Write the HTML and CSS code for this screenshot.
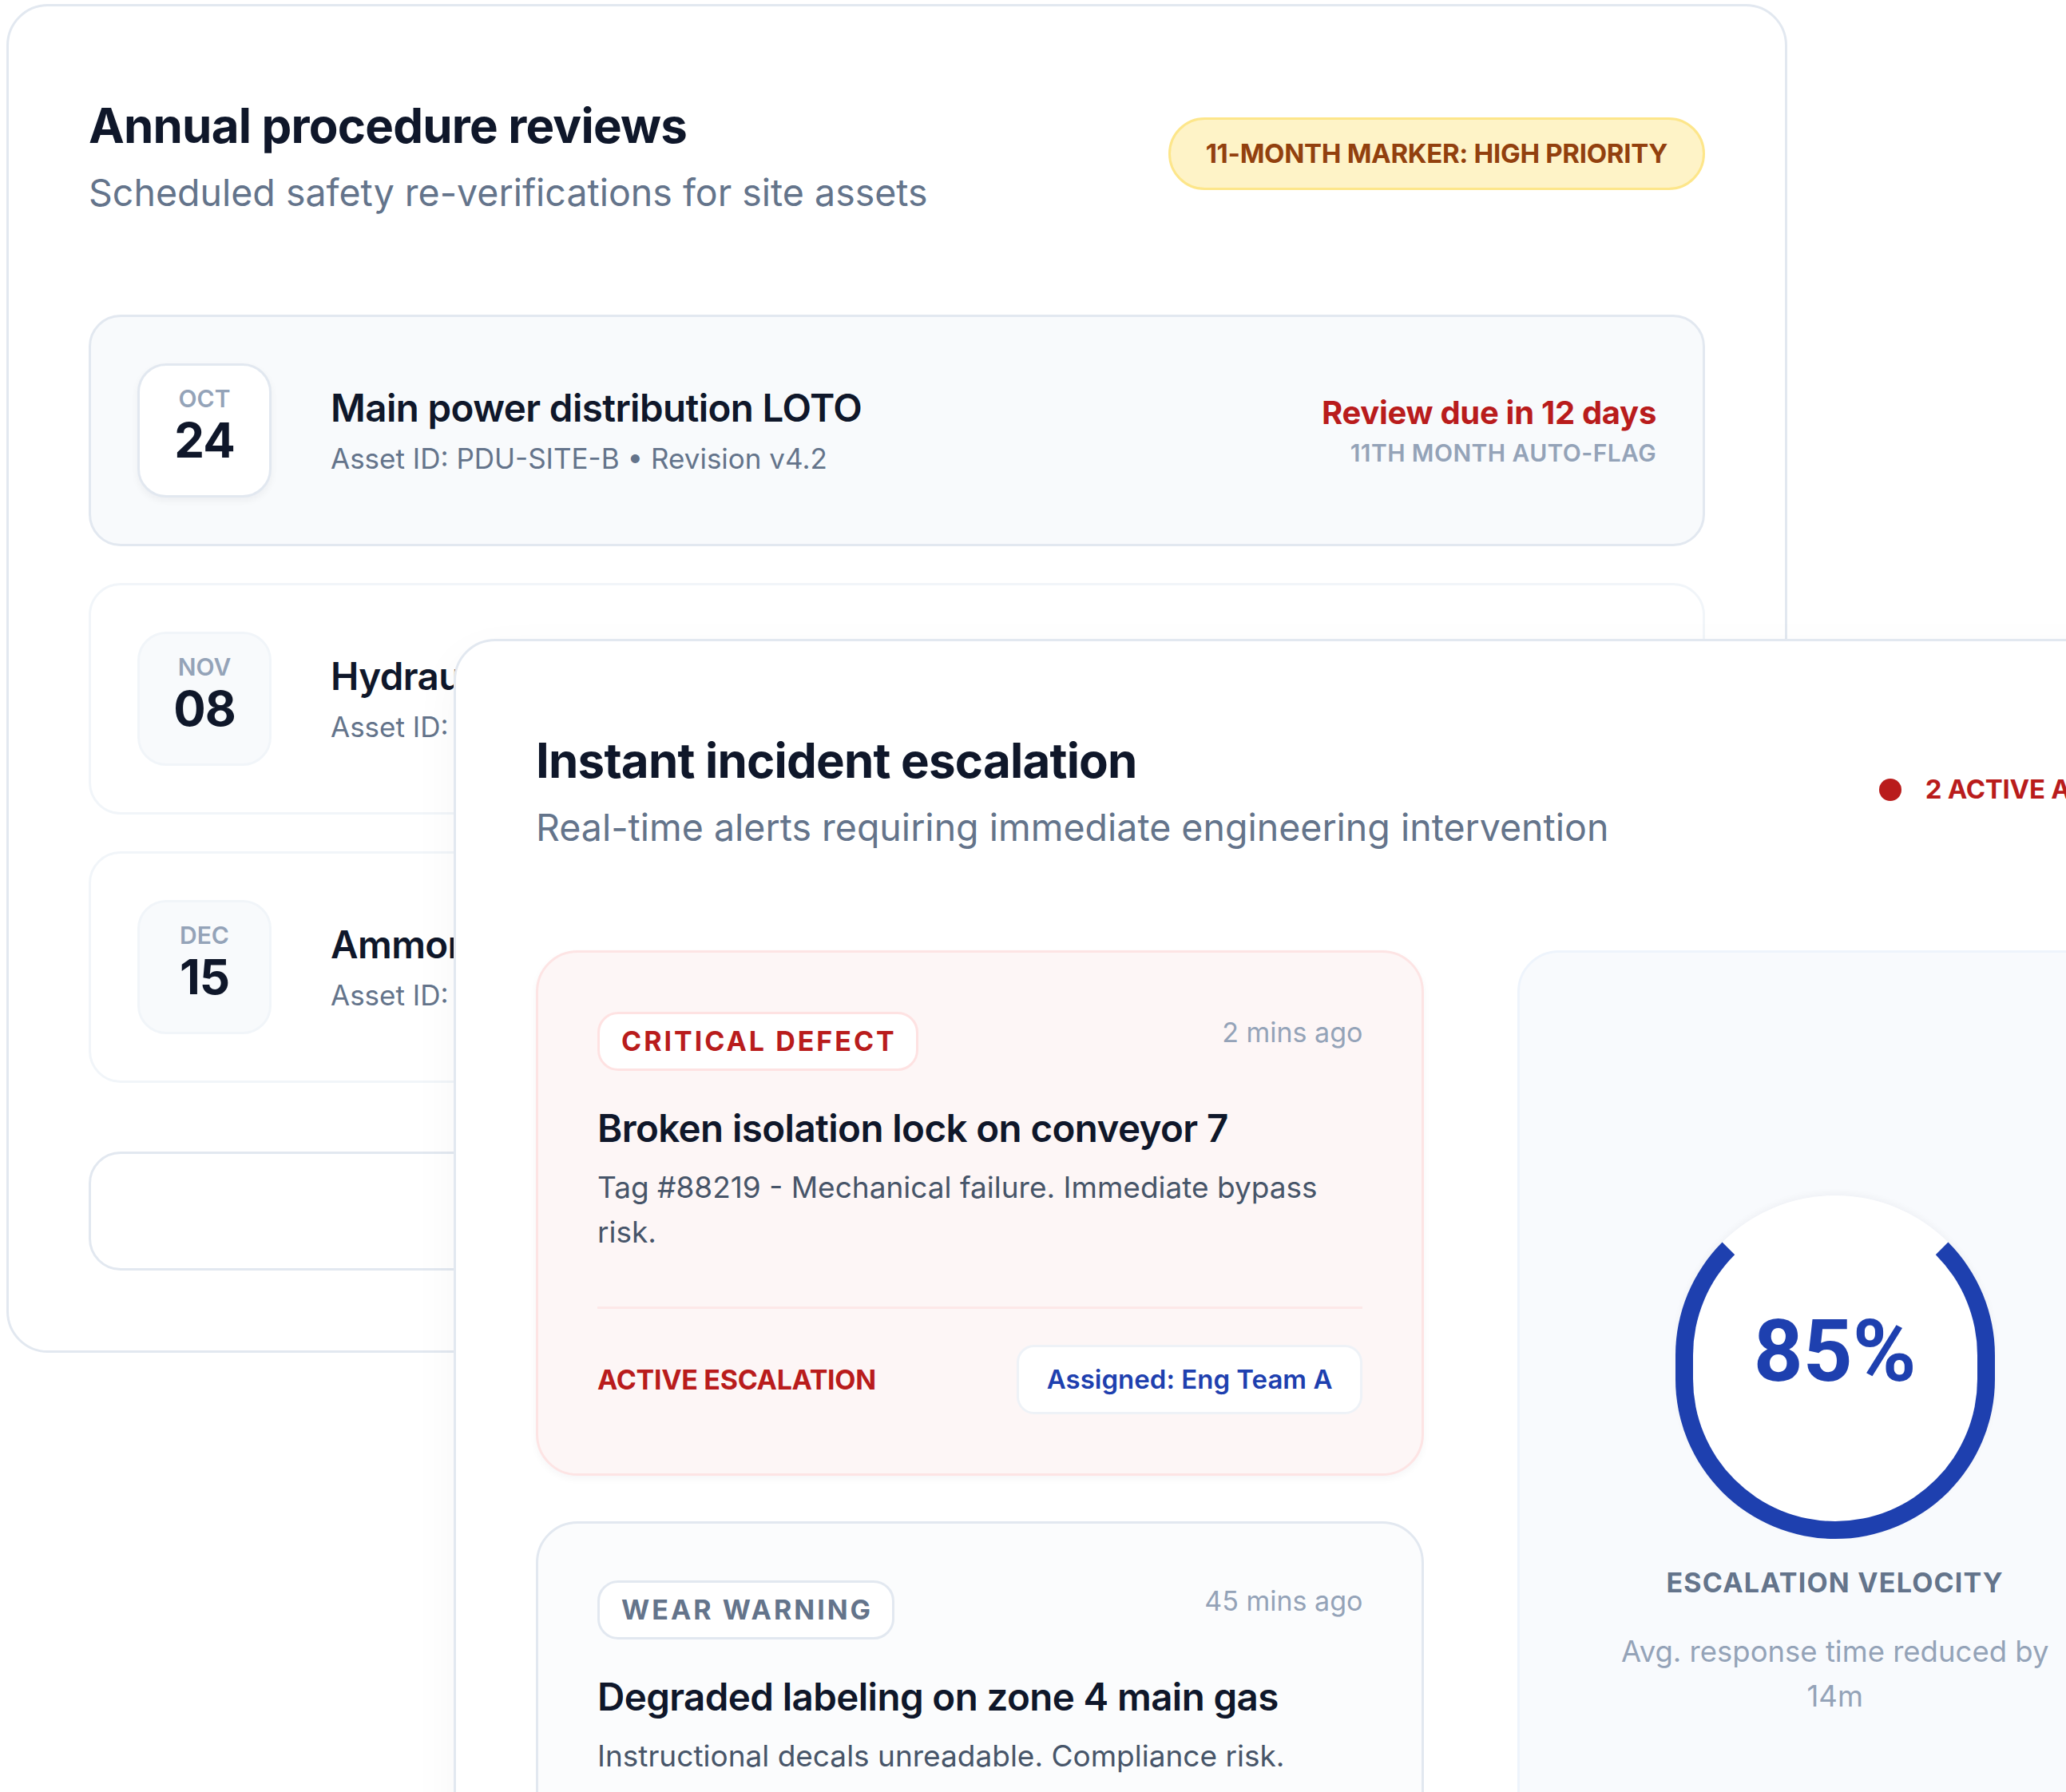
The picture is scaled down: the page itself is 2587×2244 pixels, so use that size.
FILE: index.html
```html
<!DOCTYPE html>
<html lang="en">
<head>
  <meta charset="UTF-8">
  <title>Safety reviews</title>
  <link rel="stylesheet" href="styles.css">
</head>
<body>
  <div class="panel reviews">
    <div class="panel-head">
      <div>
        <h2 class="panel-title">Annual procedure reviews</h2>
        <p class="panel-sub">Scheduled safety re-verifications for site assets</p>
      </div>
      <span class="marker">11-MONTH MARKER: HIGH PRIORITY</span>
    </div>

    <div class="review-list">
      <div class="review on">
        <div class="date">
          <span class="month">OCT</span>
          <span class="day">24</span>
        </div>
        <div class="review-info">
          <div class="review-name">Main power distribution LOTO</div>
          <div class="review-meta">Asset ID: PDU-SITE-B &bull; Revision v4.2</div>
        </div>
        <div class="review-due">
          <div class="due-text">Review due in 12 days</div>
          <div class="due-flag">11TH MONTH AUTO-FLAG</div>
        </div>
      </div>
      <div class="review">
        <div class="date">
          <span class="month">NOV</span>
          <span class="day">08</span>
        </div>
        <div class="review-info">
          <div class="review-name">Hydraulic press guard inspection</div>
          <div class="review-meta">Asset ID: HYD-PRS-04 &bull; Revision v2.1</div>
        </div>
        <div class="review-due">
          <div class="due-text muted">Due in 27 days</div>
          <div class="due-flag">SCHEDULED</div>
        </div>
      </div>
      <div class="review">
        <div class="date">
          <span class="month">DEC</span>
          <span class="day">15</span>
        </div>
        <div class="review-info">
          <div class="review-name">Ammonia refrigeration isolation</div>
          <div class="review-meta">Asset ID: NH3-REF-01 &bull; Revision v3.0</div>
        </div>
        <div class="review-due">
          <div class="due-text muted">Due in 64 days</div>
          <div class="due-flag">SCHEDULED</div>
        </div>
      </div>
    </div>

    <div class="review-more">View full review calendar</div>
  </div>

  <div class="panel escalation">
    <div class="panel-head">
      <div>
        <h2 class="panel-title">Instant incident escalation</h2>
        <p class="panel-sub">Real-time alerts requiring immediate engineering intervention</p>
      </div>
      <span class="live"><i class="live-dot"></i>2 ACTIVE ALERTS</span>
    </div>

    <div class="esc-grid">
      <div class="alerts">
        <div class="alert critical">
          <div class="alert-top">
            <span class="chip">CRITICAL DEFECT</span>
            <span class="alert-time">2 mins ago</span>
          </div>
          <div class="alert-title">Broken isolation lock on conveyor 7</div>
          <p class="alert-desc">Tag #88219 - Mechanical failure. Immediate bypass risk.</p>
          <div class="alert-foot">
            <span class="alert-state">ACTIVE ESCALATION</span>
            <span class="assign">Assigned: Eng Team A</span>
          </div>
        </div>
        <div class="alert warning">
          <div class="alert-top">
            <span class="chip">WEAR WARNING</span>
            <span class="alert-time">45 mins ago</span>
          </div>
          <div class="alert-title">Degraded labeling on zone 4 main gas</div>
          <p class="alert-desc">Instructional decals unreadable. Compliance risk.</p>
          <div class="alert-foot">
            <span class="alert-state">QUEUED</span>
            <span class="assign">Assign team</span>
          </div>
        </div>
      </div>

      <div class="velocity">
        <div class="ring"><span class="ring-value">85%</span></div>
        <div class="velocity-label">ESCALATION VELOCITY</div>
        <p class="velocity-note">Avg. response time reduced by 14m</p>
      </div>
    </div>
  </div>
</body>
</html>
```

FILE: styles.css
```css
*{
  box-sizing: border-box;
}
html, body{
  margin: 0;
  padding: 0;
  background: #fff;
}
body{
  position: relative;
  width: 2587px;
  height: 2244px;
  overflow: hidden;
  font-family: Inter, Roboto, "Liberation Sans", sans-serif;
  color: #0f172a;
}

/* shared card */
.panel{
  width: 2230px;
  background: #fff;
  border: 3px solid #e2e8f0;
  border-radius: 52px;
  padding: 113px 100px 100px;
}
.panel-head{
  display: flex;
  justify-content: space-between;
  align-items: flex-start;
}
.panel-title{
  margin: 0;
  font-size: 60px;
  line-height: 72px;
  font-weight: 700;
  letter-spacing: -0.8px;
}
.panel-sub{
  margin: 15px 0 0;
  font-size: 46.5px;
  line-height: 67px;
  color: #64748b;
}

/* back card */
.reviews{
  margin: 5px 0 0 8px;
}
.marker{
  margin-top: 26px;
  padding: 16px 44px;
  font-size: 33px;
  line-height: 53px;
  font-weight: 700;
  color: #92400e;
  background: #fef3c7;
  border: 3px solid #fde68a;
  border-radius: 60px;
  letter-spacing: -0.3px;
}
.review-list{
  margin-top: 119px;
  display: flex;
  flex-direction: column;
  gap: 46px;
}
.review{
  display: flex;
  align-items: center;
  padding: 58px;
  background: #fff;
  border: 3px solid #f1f5f9;
  border-radius: 40px;
}
.review.on{
  background: #f8fafc;
  border-color: #e2e8f0;
}
.date{
  width: 168px;
  height: 168px;
  flex: none;
  display: flex;
  flex-direction: column;
  align-items: center;
  justify-content: center;
  background: #f8fafc;
  border: 3px solid #f1f5f9;
  border-radius: 36px;
  padding-bottom: 12px;
}
.review.on .date{
  background: #fff;
  border-color: #e2e8f0;
  box-shadow: 0 4px 10px rgba(15, 23, 42, 0.05);
}
.month{
  font-size: 30px;
  line-height: 36px;
  font-weight: 600;
  color: #94a3b8;
}
.day{
  font-size: 60px;
  line-height: 68px;
  font-weight: 700;
  color: #0f172a;
  letter-spacing: -1px;
}
.review-info{
  flex: 1;
  margin-left: 74px;
}
.review-name{
  font-size: 47.5px;
  line-height: 65px;
  font-weight: 600;
  letter-spacing: -0.6px;
}
.review-meta{
  margin-top: 5px;
  font-size: 35px;
  line-height: 52px;
  color: #64748b;
}
.review-due{
  text-align: right;
}
.due-text{
  font-size: 40px;
  line-height: 56px;
  font-weight: 700;
  color: #b91c1c;
  letter-spacing: -0.3px;
}
.due-text.muted{
  color: #334155;
}
.due-flag{
  font-size: 30px;
  line-height: 45px;
  font-weight: 600;
  color: #94a3b8;
  letter-spacing: 0.4px;
}
.review-more{
  margin-top: 86px;
  height: 149px;
  display: flex;
  align-items: center;
  justify-content: center;
  border: 3px solid #e2e8f0;
  border-radius: 40px;
  font-size: 35px;
  font-weight: 600;
  color: #64748b;
}

/* front card */
.escalation{
  position: absolute;
  left: 568px;
  top: 800px;
  box-shadow: 0 20px 60px rgba(15, 23, 42, 0.04);
}
.live{
  margin-top: 46px;
  display: flex;
  align-items: center;
  font-size: 33px;
  line-height: 53px;
  font-weight: 700;
  color: #b91c1c;
  letter-spacing: -0.3px;
}
.live-dot{
  width: 28px;
  height: 28px;
  margin-right: 30px;
  border-radius: 50%;
  background: #b91c1c;
}
.esc-grid{
  margin-top: 120px;
  display: grid;
  grid-template-columns: 7fr 5fr;
  gap: 117px;
}
.alerts{
  display: flex;
  flex-direction: column;
  gap: 57px;
}
.alert{
  padding: 74px;
  border: 3px solid #e2e8f0;
  border-radius: 52px;
  background: #fbfcfd;
}
.alert.critical{
  background: #fdf6f6;
  border-color: #fde4e4;
  box-shadow: 0 4px 10px rgba(15, 23, 42, 0.04);
}
.warning .alert-top{
  margin-top: -3px;
}
.alert-top{
  display: flex;
  justify-content: space-between;
  align-items: flex-start;
}
.chip{
  padding: 8px 24px 8px 27px;
  font-size: 34px;
  line-height: 52px;
  font-weight: 700;
  letter-spacing: 3px;
  color: #64748b;
  background: #fff;
  border: 3px solid #e2e8f0;
  border-radius: 26px;
}
.critical .chip{
  color: #b91c1c;
  border-color: #fee2e2;
}
.alert-time{
  font-size: 34px;
  line-height: 52px;
  color: #94a3b8;
}
.alert-title{
  margin-top: 39px;
  font-size: 47.5px;
  line-height: 65px;
  font-weight: 600;
  letter-spacing: -0.6px;
}
.alert-desc{
  margin: 14px 0 0;
  font-size: 37px;
  line-height: 56px;
  color: #475569;
}
.alert-foot{
  margin-top: 65px;
  padding-top: 45px;
  border-top: 3px solid #fde8e8;
  display: flex;
  justify-content: space-between;
  align-items: center;
}
.warning .alert-foot{
  border-top-color: #eef2f6;
}
.alert-state{
  font-size: 34px;
  line-height: 52px;
  font-weight: 700;
  color: #b91c1c;
  letter-spacing: -0.3px;
}
.warning .alert-state{
  color: #64748b;
}
.assign{
  padding: 14px 35px;
  font-size: 33px;
  line-height: 53px;
  font-weight: 600;
  color: #1e40af;
  background: #fff;
  border: 3px solid #eef2f7;
  border-radius: 22px;
}

/* velocity column */
.velocity{
  padding-top: 304px;
  display: flex;
  flex-direction: column;
  align-items: center;
  background: #f8fafd;
  border: 3px solid #eef4fc;
  border-radius: 52px;
}
.ring{
  width: 400px;
  height: 430px;
  display: flex;
  align-items: center;
  justify-content: center;
  padding-bottom: 40px;
  background: #fff;
  border: 22px solid #1e40af;
  border-top-color: #fff;
  border-radius: 200px;
  box-shadow: 0 -3px 8px rgba(15, 23, 42, 0.04);
}
.ring-value{
  font-family: Roboto, "Liberation Sans", sans-serif;
  font-size: 108px;
  line-height: 108px;
  font-weight: 700;
  color: #1e40af;
}
.velocity-label{
  margin-top: 29px;
  font-size: 34px;
  line-height: 52px;
  font-weight: 700;
  letter-spacing: 1.2px;
  color: #64748b;
}
.velocity-note{
  max-width: 580px;
  margin: 32px 0 0;
  text-align: center;
  font-size: 36.5px;
  line-height: 56px;
  color: #94a3b8;
}
```
